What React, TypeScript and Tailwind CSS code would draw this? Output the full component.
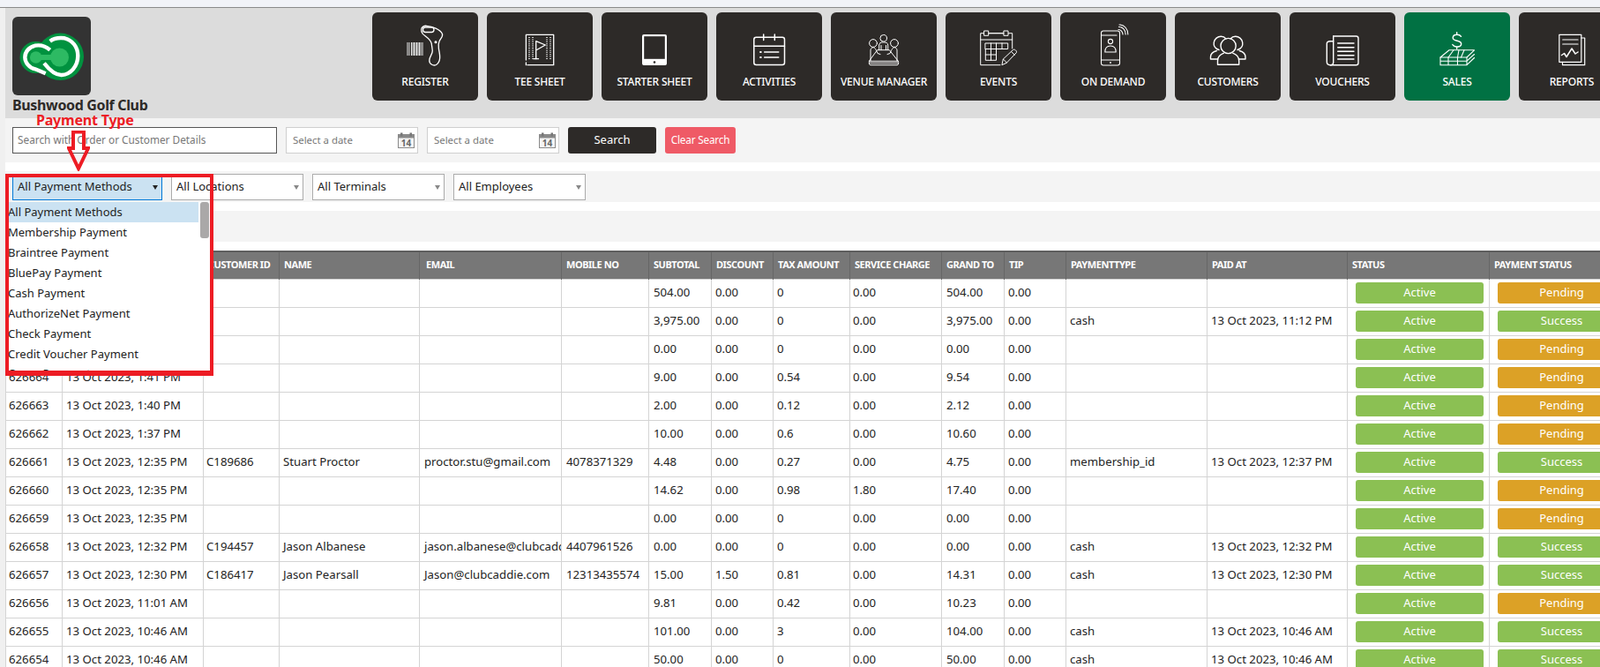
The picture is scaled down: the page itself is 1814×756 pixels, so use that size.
import React from "react";

const S = (p: { children: React.ReactNode }) => (
  <svg viewBox="0 0 120 66" className="w-[120px] h-[66px] shrink-0" fill="none" stroke="#fff" strokeWidth="1.3" strokeLinecap="round" strokeLinejoin="round">
    {p.children}
  </svg>
);

const icons: Record<string, React.ReactNode> = {
  register: (
    <S>
      <g strokeWidth="0.9" strokeLinecap="butt">
        <path d="M40 34v15M42 34v15M44.5 34v15M46 34v15M47.5 34v15M49 34v15M50.5 34v15M52 34v15M53.5 34v15M55 34v15M57 34v15" />
      </g>
      <path d="M55.7 19.3C56 16.5 59 15 61.5 15.3 68 16 77 19 79.5 24.5 80.5 28 77 30 76 33 74.5 36 75 38 75.5 42 77 49 78 56 72.5 59.5 69 61 64.5 58.5 64.8 54.3 65 50 68.5 47 68.3 43.5 68 40 67.5 38 67.3 35.5 65.5 29 59 27 57 24 56 22.5 55.6 21 55.7 19.3Z" />
      <rect x="57.5" y="17" width="12.5" height="5.5" rx="2.7" />
      <circle cx="72" cy="33.7" r="0.9" fill="#fff" />
    </S>
  ),
  tee: (
    <S>
      <path d="M46 25.4H75.7V59.7H46M44.4 59.7V57M44.4 54V25.4H46" />
      <path d="M48 28v26M52 28v26M68 28v26M72 28v26" strokeWidth="1.5" strokeDasharray="1 1.4" strokeLinecap="butt" />
      <path d="M55.7 52.7V32.7L66.3 37 55.7 43" />
      <path d="M53 52.7H58.5" />
    </S>
  ),
  starter: (
    <S>
      <rect x="46" y="25" width="28" height="35" rx="2" fill="#fff" stroke="none" />
      <rect x="48.2" y="27.2" width="23.6" height="25.6" fill="#2d2a28" stroke="none" />
      <circle cx="60" cy="56.5" r="1.3" fill="#2d2a28" stroke="none" />
    </S>
  ),
  activities: (
    <S>
      <g strokeWidth="1.5">
        <rect x="42.8" y="28.3" width="34.7" height="31.2" rx="2.5" />
        <path d="M42.8 38.3H77.5M53.7 25V31.5M66.3 25V31.5" />
        <path d="M54.7 45H70.7M54.7 51H70.7" strokeWidth="1.6" />
        <path d="M50 45H50.8M50 51H50.8" strokeWidth="1.8" />
      </g>
    </S>
  ),
  venue: (
    <S>
      <g strokeWidth="1">
        <circle cx="59.7" cy="29.3" r="3.8" />
        <circle cx="48" cy="35" r="4.4" />
        <circle cx="72" cy="35" r="4.4" />
        <path d="M54.7 42.7V37C54.7 34.8 56.5 33.9 59.7 33.9S64.7 34.8 64.7 37V42.7M57 42.7V37.5M62.5 42.7V37.5" />
        <path d="M45 55V43C45 41 46.5 39.7 48 39.7 50 40 51 42 53 46.5L56 47.5M75 55V43C75 41 73.5 39.7 72 39.7 70 40 69 42 67 46.5L64 47.5" />
        <path d="M53 42.7H66.3L76.3 55.3H43.7Z" />
        <path d="M43.7 55.3C43 57 43 59.7 45 59.7H75C77 59.7 77 57 76.3 55.3M44 57.3H76" />
      </g>
    </S>
  ),
  events: (
    <S>
      <g strokeWidth="1">
        <path d="M62 59.7H39.7V23.7H75.7V41" />
        <path d="M39.7 31H75.7M48.7 23.7H66.3" />
        <rect x="44" y="21" width="4.7" height="5.3" fill="#2d2a28" />
        <rect x="66.3" y="21" width="4.7" height="5.3" fill="#2d2a28" />
        <path d="M45.3 35H70.7V41.5H45.3ZM45.3 41.5V54.3H57.5V41.5M51.5 35V54.3M57.5 35V41.5M64 35V41.5M45.3 48H57.5" />
        <path d="M64 59.3 65.3 53 76.5 42.5C78 41 81.5 44 80.3 45.7L69.5 57ZM65.3 53 69.5 57M74.5 44.5 78.3 48.2" />
      </g>
    </S>
  ),
  demand: (
    <S>
      <g strokeWidth="1.1">
        <rect x="46.5" y="21" width="21" height="39" rx="2.5" />
        <path d="M46.5 54H67.5M46.5 26H64" />
        <circle cx="57" cy="33" r="2.6" />
        <path d="M50.8 45H63.2C63.2 40.5 61 38 57 38S50.8 40.5 50.8 45Z" />
        <path d="M66 19.5C68.5 19.5 71 22 71 25M66.5 16.5C71 16.5 74.2 20 74.2 25M67 14C73 14 76.8 19 76.8 25" />
      </g>
      <circle cx="57" cy="57" r="0.9" fill="#fff" stroke="none" />
    </S>
  ),
  customers: (
    <S>
      <g strokeWidth="1.4">
        <path d="M50 42.5C45 41 43.8 37 44.3 34 45 30 48.5 27.3 52.3 27.3 54.5 27.3 56.5 28.2 58 30" />
        <path d="M71 42.5C76 41 77.2 37 76.7 34 76 30 72.5 27.3 68.7 27.3 66.5 27.3 64.5 28.2 63 30" />
        <circle cx="60.6" cy="38" r="8.6" />
        <path d="M48.5 59.3V55C48.5 50.5 52 47.5 55.5 46.2M72.7 59.3V55C72.7 50.5 69.2 47.5 65.7 46.2M48.5 59.3H72.7" />
        <path d="M48.5 53H40.5V50.5C40.5 47 44 44.5 47.5 43.5M72.7 53H80V50.5C80 47 76.7 44.5 73.2 43.5" />
      </g>
    </S>
  ),
  vouchers: (
    <S>
      <g strokeWidth="1.4">
        <path d="M49.7 27H75.5C77 27 78 28 78 29.5V57.2C78 58.7 77 59.7 75.5 59.7H46C43.5 59.7 42.3 58 42.3 56V35.5C42.3 33.5 44 32.7 46 32.7H49.7" />
        <path d="M49.7 27V56.5C49.7 58.5 48.5 59.7 46.5 59.7" />
        <path d="M54.7 35H73M54.7 39.7H73M54.7 44.3H73M54.7 48.7H73M54.7 53H73" />
      </g>
    </S>
  ),
  sales: (
    <S>
      <g strokeWidth="1.4">
        <path d="M64.5 27.3C63.5 25.8 62 25.2 60 25.2 57 25.2 55.2 26.7 55.2 28.8 55.2 31 57.2 31.7 60 32.3 62.8 32.9 64.7 33.6 64.7 35.8 64.7 38 62.8 39 60 39 57.6 39 55.7 38 54.8 36.5M59.7 22.7V25M59.7 39V41.3" />
      </g>
      <g strokeWidth="1.1">
        <path d="M51 42.8H79.5L71 51H41Z" />
        <path d="M56 42.8 50 51M62 42.8 60.5 51M68 42.8 64.5 51" />
        <path d="M41 51V59.7H71L79.5 51.5M41 55.2H71L79.5 47.5M71 51V59.7M50 51V59.7M60.5 51V59.7" />
      </g>
    </S>
  ),
  reports: (
    <S>
      <g strokeWidth="1.2">
        <rect x="45.8" y="25.3" width="25" height="31" />
        <path d="M70.8 29H74.7V59.7H49.5V56.3" />
        <path d="M49.7 31H67M49.7 36H67" />
        <path d="M48.5 48.5 51.5 46.5 54 50.5 60 41 64 47 67 45" strokeWidth="1.5" />
      </g>
    </S>
  ),
};

const tiles: [string, string, boolean?][] = [
  ["register", "REGISTER"],
  ["tee", "TEE SHEET"],
  ["starter", "STARTER SHEET"],
  ["activities", "ACTIVITIES"],
  ["venue", "VENUE MANAGER"],
  ["events", "EVENTS"],
  ["demand", "ON DEMAND"],
  ["customers", "CUSTOMERS"],
  ["vouchers", "VOUCHERS"],
  ["sales", "SALES", true],
  ["reports", "REPORTS"],
];

const Logo = () => (
  <div className="w-[89px] h-[89px] rounded-md bg-[#333333] shrink-0">
    <svg viewBox="0 0 89 89" className="w-[89px] h-[89px]" fill="none">
      <circle cx="26.5" cy="46" r="18" fill="#00923f" />
      <circle cx="54.3" cy="45.3" r="26.7" fill="#00923f" />
      <circle cx="26.7" cy="46" r="6.8" fill="#2dba63" />
      <circle cx="53.5" cy="46" r="10.5" fill="#2dba63" />
      <path d="M30 43H46V49H30Z" fill="#2dba63" />
      <path d="M42.7 37.7C38 33.5 32 31.7 26 32.7 18.5 34.5 14.3 40 14.3 46 14.5 52 19 58 26 59.3L37.7 64.3" stroke="#fff" strokeWidth="4.4" />
      <path d="M42.7 27.7C47 24.5 53 23.5 59.3 24.3 68 26.5 74.3 34 74.3 44.3 74.3 56 66 65.5 56 66 48 66.5 41 59 36 52.7" stroke="#fff" strokeWidth="4.4" />
    </svg>
  </div>
);

const Cal = () => (
  <svg viewBox="0 0 19 18" className="w-[19px] h-[18px] shrink-0" fill="none">
    <rect x="0.5" y="2.5" width="18" height="15" fill="#f4f4f4" stroke="#8a8a8a" />
    <rect x="0.5" y="2.5" width="18" height="4" fill="#8a8a8a" />
    <rect x="3" y="0.5" width="2.5" height="4" fill="#777" />
    <rect x="13.5" y="0.5" width="2.5" height="4" fill="#777" />
    <text x="9.5" y="15.5" textAnchor="middle" fontSize="10" fontWeight="700" fill="#666" fontFamily="Open Sans, sans-serif">14</text>
  </svg>
);

const DateBox = () => (
  <div className="w-[150px] h-[30px] bg-white border border-[#cfcfcf] flex items-center justify-between pl-[7px] pr-[3px] text-[11.4px] text-[#777]">
    <span>Select a date</span>
    <Cal />
  </div>
);

const Sel = ({ label, active, w }: { label: string; active?: boolean; w: string }) => (
  <div className={`${w} h-[30px] border flex items-center justify-between pl-[5px] pr-[4px] text-[13px] text-[#222] ${active ? "bg-[#cbe2f2] border-[#0078d7]" : "bg-white border-[#ababab]"}`}>
    <span>{label}</span>
    <span className={`w-0 h-0 border-l-[3.5px] border-r-[3.5px] border-t-[5px] border-l-transparent border-r-transparent ${active ? "border-t-[#222]" : "border-t-[#888]"}`} />
  </div>
);

type R = [string, string, string, string, string, string, string, string, string, string, string, string, string, string, string];
const d = "13 Oct 2023, ";
const rows: R[] = [
  ["626667", d + "11:12 PM", "", "", "", "", "504.00", "0.00", "0", "0.00", "504.00", "0.00", "", "", "Pending"],
  ["626666", d + "11:12 PM", "", "", "", "", "3,975.00", "0.00", "0", "0.00", "3,975.00", "0.00", "cash", d + "11:12 PM", "Success"],
  ["626665", d + "1:43 PM", "", "", "", "", "0.00", "0.00", "0", "0.00", "0.00", "0.00", "", "", "Pending"],
  ["626664", d + "1:41 PM", "", "", "", "", "9.00", "0.00", "0.54", "0.00", "9.54", "0.00", "", "", "Pending"],
  ["626663", d + "1:40 PM", "", "", "", "", "2.00", "0.00", "0.12", "0.00", "2.12", "0.00", "", "", "Pending"],
  ["626662", d + "1:37 PM", "", "", "", "", "10.00", "0.00", "0.6", "0.00", "10.60", "0.00", "", "", "Pending"],
  ["626661", d + "12:35 PM", "C189686", "Stuart Proctor", "proctor.stu@gmail.com", "4078371329", "4.48", "0.00", "0.27", "0.00", "4.75", "0.00", "membership_id", d + "12:37 PM", "Success"],
  ["626660", d + "12:35 PM", "", "", "", "", "14.62", "0.00", "0.98", "1.80", "17.40", "0.00", "", "", "Pending"],
  ["626659", d + "12:35 PM", "", "", "", "", "0.00", "0.00", "0", "0.00", "0.00", "0.00", "", "", "Pending"],
  ["626658", d + "12:32 PM", "C194457", "Jason Albanese", "jason.albanese@clubcaddie.com", "4407961526", "0.00", "0.00", "0", "0.00", "0.00", "0.00", "cash", d + "12:32 PM", "Success"],
  ["626657", d + "12:30 PM", "C186417", "Jason Pearsall", "Jason@clubcaddie.com", "12313435574", "15.00", "1.50", "0.81", "0.00", "14.31", "0.00", "cash", d + "12:30 PM", "Success"],
  ["626656", d + "11:01 AM", "", "", "", "", "9.81", "0.00", "0.42", "0.00", "10.23", "0.00", "", "", "Pending"],
  ["626655", d + "10:46 AM", "", "", "", "", "101.00", "0.00", "3", "0.00", "104.00", "0.00", "cash", d + "10:46 AM", "Success"],
  ["626654", d + "10:46 AM", "", "", "", "", "50.00", "0.00", "0", "0.00", "50.00", "0.00", "cash", d + "10:46 AM", "Success"],
];

const heads = ["ORDER ID", "ORDER DATE", "CUSTOMER ID", "NAME", "EMAIL", "MOBILE NO", "SUBTOTAL", "DISCOUNT", "TAX AMOUNT", "SERVICE CHARGE", "GRAND TO", "TIP", "PAYMENTTYPE", "PAID AT", "STATUS", "PAYMENT STATUS"];
const cols = ["w-[64px]", "w-[160px]", "w-[86px]", "w-[159px]", "w-[161px]", "w-[99px]", "w-[71px]", "w-[70px]", "w-[87px]", "w-[104px]", "w-[71px]", "w-[70px]", "w-[160px]", "w-[159px]", "w-[161px]", "w-[161px]"];
const pads = ["pl-[3px]", "pl-[4px]", "pl-[3px]", "pl-[4px]", "pl-[5px]", "pl-[5px]", "pl-[5px]", "pl-[4px]", "pl-[4px]", "pl-[3px]", "pl-[5px]", "pl-[4px]", "pl-[4px]", "pl-[4px]"];

const opts = ["All Payment Methods", "Membership Payment", "Braintree Payment", "BluePay Payment", "Cash Payment", "AuthorizeNet Payment", "Check Payment", "Credit Voucher Payment", "Comp Payment"];

const Badge = ({ t, c }: { t: string; c: string }) => (
  <div className={`h-[24px] ml-[9px] mr-[6px] rounded-[3px] flex items-center justify-center text-white text-[13px] ${c}`}>{t}</div>
);

export default function App() {
  return (
    <div className="relative w-[1814px] h-[756px] overflow-hidden bg-white font-['Open_Sans',sans-serif] text-[#222]">
      <div className="h-[8px] bg-[#f1f3f8]" />
      <div className="h-px bg-[#8a8a8a]" />
      <div className="flex">
        <div className="w-[6px] shrink-0 h-[747px] bg-[#f0f0f0]" />
        <div className="w-[1808px] shrink-0 relative">
          {/* top header */}
          <div className="h-[125px] bg-[#dcdcdc] flex">
            <div className="w-[416px] shrink-0 pl-[8px] pt-[10px]">
              <Logo />
              <div className="text-[16px] leading-[22px] font-bold text-[#2d2a28] whitespace-nowrap -tracking-[0.35px]">Bushwood Golf Club</div>
            </div>
            <div className="flex gap-[10px] pt-[5px]">
              {tiles.map(([k, l, on]) => (
                <div key={k} className={`w-[120px] h-[100px] shrink-0 rounded-md flex flex-col items-center ${on ? "bg-[#017143]" : "bg-[#2d2a28]"}`}>
                  {icons[k]}
                  <div className="text-[12px] leading-[16px] mt-[5px] text-white font-medium whitespace-nowrap -tracking-[0.2px]">{l}</div>
                </div>
              ))}
            </div>
          </div>
          {/* search row */}
          <div className="h-[50px] bg-[#f4f4f4] pl-[8px] pt-[10px] flex gap-[10px]">
            <div className="w-[300px] h-[30px] bg-white border border-[#555] flex items-center pl-[5px] text-[11.8px] text-[#777]">Search with Order or Customer Details</div>
            <DateBox />
            <DateBox />
            <div className="w-[100px] h-[30px] rounded-[3px] bg-[#2d2a28] text-white text-[13px] flex items-center justify-center">Search</div>
            <div className="w-[80px] h-[30px] rounded-[3px] bg-[#ef5a66] text-white text-[11.8px] flex items-center justify-center whitespace-nowrap -tracking-[0.2px]">Clear Search</div>
          </div>
          <div className="h-[10px]" />
          {/* filter row */}
          <div className="h-[35px] bg-[#f4f4f4] pl-[8px] pt-[3px] flex gap-[10px]">
            <Sel label="All Payment Methods" active w="w-[170px]" />
            <Sel label="All Locations" w="w-[150px]" />
            <Sel label="All Terminals" w="w-[150px]" />
            <Sel label="All Employees" w="w-[150px]" />
          </div>
          <div className="h-[10px]" />
          <div className="h-[35px] bg-[#f4f4f4]" />
          <div className="h-[10px]" />
          {/* table */}
          <table className="table-fixed border-collapse w-[1842px] text-[13.2px]">
            <colgroup>
              {cols.map((c, i) => (
                <col key={i} className={c} />
              ))}
            </colgroup>
            <thead>
              <tr className="h-[31px] bg-[#777777] border-t-2 border-t-[#5e5e5e] border-b border-b-[#555]">
                {heads.map((h, i) => (
                  <th key={h} className={`border-r border-r-[#666] pb-[2px] ${i === 4 ? "pl-[7px]" : "pl-[5px]"} pr-0 text-left text-[11px] font-bold text-white whitespace-nowrap overflow-hidden -tracking-[0.45px]`}>{h}</th>
                ))}
              </tr>
            </thead>
            <tbody>
              {rows.map((r) => (
                <tr key={r[0]} className="h-[32px]">
                  {r.slice(0, 14).map((c, i) => (
                    <td key={i} className={`border border-[#d4d4d4] whitespace-nowrap overflow-hidden ${pads[i]}`}>{c}</td>
                  ))}
                  <td className="border border-[#d4d4d4]"><Badge t="Active" c="bg-[#8bc053]" /></td>
                  <td className="border border-[#d4d4d4]"><Badge t={r[14]} c={r[14] === "Success" ? "bg-[#8bc053]" : "bg-[#dca126]"} /></td>
                </tr>
              ))}
            </tbody>
          </table>
        </div>
      </div>

      {/* open dropdown over the table */}
      <div className="absolute left-[8px] top-[229px] w-[230px] h-[191px] bg-white overflow-hidden text-[13px]">
        {opts.map((o, i) => (
          <div key={o} className={`h-[23px] leading-[23px] pl-[1px] w-[217px] ${i === 0 ? "bg-[#cbe2f2]" : ""} ${i === 8 ? "-mt-[1px]" : ""}`}>{o}</div>
        ))}
        <div className="absolute left-[219px] top-0 w-[10px] h-[41px] bg-[#aaa8a8] rounded-[3px]" />
      </div>

      {/* annotation */}
      <div className="absolute left-[6px] top-[197px] w-[236px] h-[229px] border-4 border-b-[6px] border-[#ed1c24]" />
      <div className="absolute left-[41px] top-[125px] text-[16px] leading-[22px] font-bold text-[#ed1c24] whitespace-nowrap -tracking-[0.2px]">Payment Type</div>
      <svg viewBox="0 0 26 46" className="absolute left-[76px] top-[148px] w-[26px] h-[46px]" fill="none" stroke="#ed1c24" strokeWidth="4">
        <path d="M7 1.5H19V20H24L13 43 2 20H7Z" />
      </svg>
    </div>
  );
}
